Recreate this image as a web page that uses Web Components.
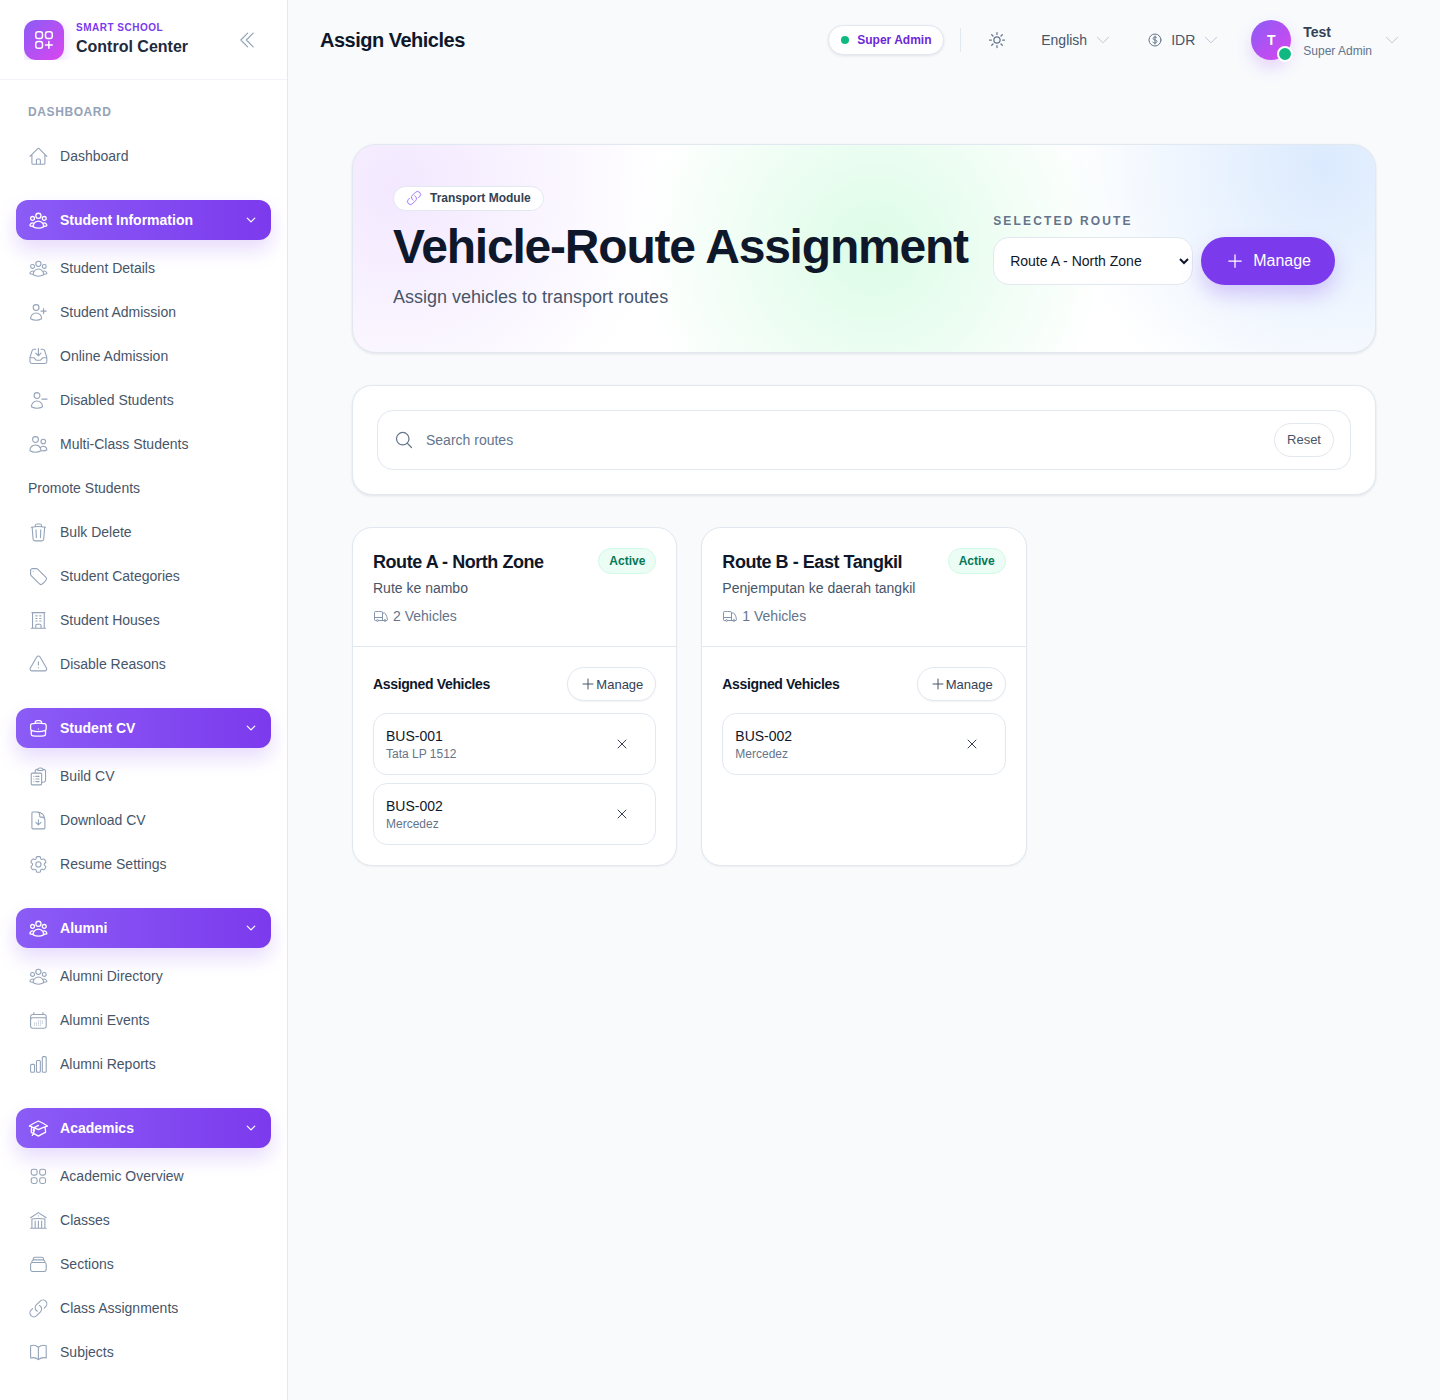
<!DOCTYPE html>
<html lang="en">
<head>
<meta charset="utf-8">
<title>Assign Vehicles</title>
<style>
  html, body { margin: 0; padding: 0; background: #f8fafc; }
  body { font-family: "Liberation Sans", Arial, sans-serif; height: 1400px; overflow: hidden; }
</style>
</head>
<body>
<app-shell>
  <side-bar slot="side">
    <nav-label>Dashboard</nav-label>
    <nav-item icon="home">Dashboard</nav-item>

    <nav-group icon="userGroup" label="Student Information">
      <nav-item icon="userGroup">Student Details</nav-item>
      <nav-item icon="userPlus">Student Admission</nav-item>
      <nav-item icon="inbox">Online Admission</nav-item>
      <nav-item icon="userMinus">Disabled Students</nav-item>
      <nav-item icon="users">Multi-Class Students</nav-item>
      <nav-item>Promote Students</nav-item>
      <nav-item icon="trash">Bulk Delete</nav-item>
      <nav-item icon="tag">Student Categories</nav-item>
      <nav-item icon="building">Student Houses</nav-item>
      <nav-item icon="warning">Disable Reasons</nav-item>
    </nav-group>

    <nav-group icon="briefcase" label="Student CV">
      <nav-item icon="clipboard">Build CV</nav-item>
      <nav-item icon="docDown">Download CV</nav-item>
      <nav-item icon="cog">Resume Settings</nav-item>
    </nav-group>

    <nav-group icon="userGroup" label="Alumni">
      <nav-item icon="userGroup">Alumni Directory</nav-item>
      <nav-item icon="calendar">Alumni Events</nav-item>
      <nav-item icon="chart">Alumni Reports</nav-item>
    </nav-group>

    <nav-group icon="cap" label="Academics">
      <nav-item icon="grid">Academic Overview</nav-item>
      <nav-item icon="library">Classes</nav-item>
      <nav-item icon="stack">Sections</nav-item>
      <nav-item icon="link">Class Assignments</nav-item>
      <nav-item icon="book">Subjects</nav-item>
    </nav-group>
  </side-bar>

  <top-bar slot="top" heading="Assign Vehicles"></top-bar>

  <hero-banner
    tag="Transport Module"
    heading="Vehicle-Route Assignment"
    sub="Assign vehicles to transport routes"></hero-banner>

  <search-card></search-card>

  <route-grid>
    <route-card name="Route A - North Zone" desc="Rute ke nambo" count="2 Vehicles">
      <vehicle-row code="BUS-001" model="Tata LP 1512"></vehicle-row>
      <vehicle-row code="BUS-002" model="Mercedez"></vehicle-row>
    </route-card>
    <route-card name="Route B - East Tangkil" desc="Penjemputan ke daerah tangkil" count="1 Vehicles">
      <vehicle-row code="BUS-002" model="Mercedez"></vehicle-row>
    </route-card>
  </route-grid>
</app-shell>

<script>
const ICONS = {
  home: 'm2.25 12 8.954-8.955c.44-.439 1.152-.439 1.591 0L21.75 12M4.5 9.75v10.125c0 .621.504 1.125 1.125 1.125H9.75v-4.875c0-.621.504-1.125 1.125-1.125h2.25c.621 0 1.125.504 1.125 1.125V21h4.125c.621 0 1.125-.504 1.125-1.125V9.75M8.25 21h8.25',
  userGroup: 'M18 18.72a9.094 9.094 0 0 0 3.741-.479 3 3 0 0 0-4.682-2.72m.94 3.198.001.031c0 .225-.012.447-.037.666A11.944 11.944 0 0 1 12 21c-2.17 0-4.207-.576-5.963-1.584A6.062 6.062 0 0 1 6 18.719m12 0a5.971 5.971 0 0 0-.941-3.197m0 0A5.995 5.995 0 0 0 12 12.75a5.995 5.995 0 0 0-5.058 2.772m0 0a3 3 0 0 0-4.681 2.72 8.986 8.986 0 0 0 3.74.477m.94-3.197a5.971 5.971 0 0 0-.94 3.197M15 6.75a3 3 0 1 1-6 0 3 3 0 0 1 6 0Zm6 3a2.25 2.25 0 1 1-4.5 0 2.25 2.25 0 0 1 4.5 0Zm-13.5 0a2.25 2.25 0 1 1-4.5 0 2.25 2.25 0 0 1 4.5 0Z',
  userPlus: 'M18 7.5v3m0 0v3m0-3h3m-3 0h-3m-2.25-4.125a3.375 3.375 0 1 1-6.75 0 3.375 3.375 0 0 1 6.75 0ZM3 19.235v-.11a6.375 6.375 0 0 1 12.75 0v.109A12.318 12.318 0 0 1 9.374 21c-2.331 0-4.512-.645-6.374-1.766Z',
  userMinus: 'M22 10.5h-6m-2.25-4.125a3.375 3.375 0 1 1-6.75 0 3.375 3.375 0 0 1 6.75 0ZM4 19.235v-.11a6.375 6.375 0 0 1 12.75 0v.109A12.318 12.318 0 0 1 10.374 21c-2.331 0-4.512-.645-6.374-1.766Z',
  users: 'M15 19.128a9.38 9.38 0 0 0 2.625.372 9.337 9.337 0 0 0 4.121-.952 4.125 4.125 0 0 0-7.533-2.493M15 19.128v-.003c0-1.113-.285-2.16-.786-3.07M15 19.128v.106A12.318 12.318 0 0 1 8.624 21c-2.331 0-4.512-.645-6.374-1.766l-.001-.109a6.375 6.375 0 0 1 11.964-3.07M12 6.375a3.375 3.375 0 1 1-6.75 0 3.375 3.375 0 0 1 6.75 0Zm8.25 2.25a2.625 2.625 0 1 1-5.25 0 2.625 2.625 0 0 1 5.25 0Z',
  inbox: 'M9 3.75H6.912a2.25 2.25 0 0 0-2.15 1.588L2.35 13.177a2.25 2.25 0 0 0-.1.661V18a2.25 2.25 0 0 0 2.25 2.25h15A2.25 2.25 0 0 0 21.75 18v-4.162c0-.224-.034-.447-.1-.661L19.24 5.338a2.25 2.25 0 0 0-2.15-1.588H15M2.25 13.5h3.86a2.25 2.25 0 0 1 2.012 1.244l.256.512a2.25 2.25 0 0 0 2.013 1.244h3.218a2.25 2.25 0 0 0 2.013-1.244l.256-.512a2.25 2.25 0 0 1 2.013-1.244h3.859M12 3v8.25m0 0-3-3m3 3 3-3',
  trash: 'm14.74 9-.346 9m-4.788 0L9.26 9m9.968-3.21c.342.052.682.107 1.022.166m-1.022-.165L18.16 19.673a2.25 2.25 0 0 1-2.244 2.077H8.084a2.25 2.25 0 0 1-2.244-2.077L4.772 5.79m14.456 0a48.108 48.108 0 0 0-3.478-.397m-12 .562c.34-.059.68-.114 1.022-.165m0 0a48.11 48.11 0 0 1 3.478-.397m7.5 0v-.916c0-1.18-.91-2.164-2.09-2.201a51.964 51.964 0 0 0-3.32 0c-1.18.037-2.09 1.022-2.09 2.201v.916m7.5 0a48.667 48.667 0 0 0-7.5 0',
  tag: 'M9.568 3H5.25A2.25 2.25 0 0 0 3 5.25v4.318c0 .597.237 1.17.659 1.591l9.581 9.581c.699.699 1.78.872 2.607.33a18.095 18.095 0 0 0 5.223-5.223c.542-.827.369-1.908-.33-2.607L11.16 3.66A2.25 2.25 0 0 0 9.568 3Z M6 6h.008v.008H6V6Z',
  building: 'M3.75 21h16.5M4.5 3h15M5.25 3v18m13.5-18v18M9 6.75h1.5m-1.5 3h1.5m-1.5 3h1.5m3-6H15m-1.5 3H15m-1.5 3H15M9 21v-3.375c0-.621.504-1.125 1.125-1.125h3.75c.621 0 1.125.504 1.125 1.125V21',
  warning: 'M12 9v3.75m-9.303 3.376c-.866 1.5.217 3.374 1.948 3.374h14.71c1.73 0 2.813-1.874 1.948-3.374L13.949 3.378c-.866-1.5-3.032-1.5-3.898 0L2.697 16.126ZM12 15.75h.007v.008H12v-.008Z',
  briefcase: 'M20.25 14.15v4.25c0 1.094-.787 2.036-1.872 2.18-2.087.277-4.216.42-6.378.42s-4.291-.143-6.378-.42c-1.085-.144-1.872-1.086-1.872-2.18v-4.25m16.5 0a2.18 2.18 0 0 0 .75-1.661V8.706c0-1.081-.768-2.015-1.837-2.175a48.114 48.114 0 0 0-3.413-.387m4.5 8.006c-.194.165-.42.295-.673.38A23.978 23.978 0 0 1 12 15.75c-2.648 0-5.195-.429-7.577-1.22a2.016 2.016 0 0 1-.673-.38m0 0A2.18 2.18 0 0 1 3 12.489V8.706c0-1.081.768-2.015 1.837-2.175a48.111 48.111 0 0 1 3.413-.387m7.5 0V5.25A2.25 2.25 0 0 0 13.5 3h-3a2.25 2.25 0 0 0-2.25 2.25v.894m7.5 0a48.667 48.667 0 0 0-7.5 0M12 12.75h.008v.008H12v-.008Z',
  clipboard: 'M9 12h3.75M9 15h3.75M9 18h3.75m3 .75H18a2.25 2.25 0 0 0 2.25-2.25V6.108c0-1.135-.845-2.098-1.976-2.192a48.424 48.424 0 0 0-1.123-.08m-5.801 0c-.065.21-.1.433-.1.664 0 .414.336.75.75.75h4.5a.75.75 0 0 0 .75-.75 2.25 2.25 0 0 0-.1-.664m-5.8 0A2.251 2.251 0 0 1 13.5 2.25H15c1.012 0 1.867.668 2.15 1.586m-5.8 0c-.376.023-.75.05-1.124.08C9.095 4.01 8.25 4.973 8.25 6.108V8.25m0 0H4.875c-.621 0-1.125.504-1.125 1.125v11.25c0 .621.504 1.125 1.125 1.125h9.75c.621 0 1.125-.504 1.125-1.125V9.375c0-.621-.504-1.125-1.125-1.125H8.25ZM6.75 12h.008v.008H6.75V12Zm0 3h.008v.008H6.75V15Zm0 3h.008v.008H6.75V18Z',
  docDown: 'M19.5 14.25v-2.625a3.375 3.375 0 0 0-3.375-3.375h-1.5A1.125 1.125 0 0 1 13.5 7.125v-1.5a3.375 3.375 0 0 0-3.375-3.375H8.25m.75 12 3 3m0 0 3-3m-3 3v-6m-1.5-9H5.625c-.621 0-1.125.504-1.125 1.125v17.25c0 .621.504 1.125 1.125 1.125h12.75c.621 0 1.125-.504 1.125-1.125V11.25a9 9 0 0 0-9-9Z',
  cog: 'M9.594 3.94c.09-.542.56-.94 1.11-.94h2.593c.55 0 1.02.398 1.11.94l.213 1.281c.063.374.313.686.645.87.074.04.147.083.22.127.325.196.72.257 1.075.124l1.217-.456a1.125 1.125 0 0 1 1.37.49l1.296 2.247a1.125 1.125 0 0 1-.26 1.431l-1.003.827c-.293.241-.438.613-.43.992a7.723 7.723 0 0 1 0 .255c-.008.378.137.75.43.991l1.004.827c.424.35.534.955.26 1.43l-1.298 2.247a1.125 1.125 0 0 1-1.369.491l-1.217-.456c-.355-.133-.75-.072-1.076.124a6.47 6.47 0 0 1-.22.128c-.331.183-.581.495-.644.869l-.213 1.281c-.09.543-.56.94-1.11.94h-2.594c-.55 0-1.019-.398-1.11-.94l-.213-1.281c-.062-.374-.312-.686-.644-.87a6.52 6.52 0 0 1-.22-.127c-.325-.196-.72-.257-1.076-.124l-1.217.456a1.125 1.125 0 0 1-1.369-.49l-1.297-2.247a1.125 1.125 0 0 1 .26-1.431l1.004-.827c.292-.24.437-.613.43-.991a6.932 6.932 0 0 1 0-.255c.007-.38-.138-.751-.43-.992l-1.004-.827a1.125 1.125 0 0 1-.26-1.43l1.297-2.247a1.125 1.125 0 0 1 1.37-.491l1.216.456c.356.133.751.072 1.076-.124.072-.044.146-.086.22-.128.332-.183.582-.495.644-.869l.214-1.28Z M15 12a3 3 0 1 1-6 0 3 3 0 0 1 6 0Z',
  calendar: 'M6.75 3v2.25M17.25 3v2.25M3 18.75V7.5a2.25 2.25 0 0 1 2.25-2.25h13.5A2.25 2.25 0 0 1 21 7.5v11.25m-18 0A2.25 2.25 0 0 0 5.25 21h13.5A2.25 2.25 0 0 0 21 18.75m-18 0v-7.5A2.25 2.25 0 0 1 5.25 9h13.5A2.25 2.25 0 0 1 21 11.25v7.5m-9-6h.008v.008H12v-.008ZM12 15h.008v.008H12V15Zm0 2.25h.008v.008H12v-.008ZM9.75 15h.008v.008H9.75V15Zm0 2.25h.008v.008H9.75v-.008ZM7.5 15h.008v.008H7.5V15Zm0 2.25h.008v.008H7.5v-.008Zm6.75-4.5h.008v.008h-.008v-.008Zm0 2.25h.008v.008h-.008V15Zm0 2.25h.008v.008h-.008v-.008Zm2.25-4.5h.008v.008H16.5v-.008Zm0 2.25h.008v.008H16.5V15Z',
  chart: 'M3 13.125C3 12.504 3.504 12 4.125 12h2.25c.621 0 1.125.504 1.125 1.125v6.75C7.5 20.496 6.996 21 6.375 21h-2.25A1.125 1.125 0 0 1 3 19.875v-6.75ZM9.75 8.625c0-.621.504-1.125 1.125-1.125h2.25c.621 0 1.125.504 1.125 1.125v11.25c0 .621-.504 1.125-1.125 1.125h-2.25a1.125 1.125 0 0 1-1.125-1.125V8.625ZM16.5 4.125c0-.621.504-1.125 1.125-1.125h2.25C20.496 3 21 3.504 21 4.125v15.75c0 .621-.504 1.125-1.125 1.125h-2.25a1.125 1.125 0 0 1-1.125-1.125V4.125Z',
  cap: 'M4.26 10.147a60.438 60.438 0 0 0-.491 6.347A48.62 48.62 0 0 1 12 20.904a48.62 48.62 0 0 1 8.232-4.41 60.46 60.46 0 0 0-.491-6.347m-15.482 0a50.636 50.636 0 0 0-2.658-.813A59.906 59.906 0 0 1 12 3.493a59.903 59.903 0 0 1 10.399 5.84c-.896.248-1.783.52-2.658.814m-15.482 0A50.717 50.717 0 0 1 12 13.489a50.702 50.702 0 0 1 7.74-3.342M6.75 15a.75.75 0 1 0 0-1.5.75.75 0 0 0 0 1.5Zm0 0v-3.675A55.378 55.378 0 0 1 12 8.443m-7.007 11.55A5.981 5.981 0 0 0 6.75 15.75v-1.5',
  grid: 'M3.75 6A2.25 2.25 0 0 1 6 3.75h2.25A2.25 2.25 0 0 1 10.5 6v2.25a2.25 2.25 0 0 1-2.25 2.25H6a2.25 2.25 0 0 1-2.25-2.25V6ZM3.75 15.75A2.25 2.25 0 0 1 6 13.5h2.25a2.25 2.25 0 0 1 2.25 2.25V18a2.25 2.25 0 0 1-2.25 2.25H6A2.25 2.25 0 0 1 3.75 18v-2.25ZM13.5 6a2.25 2.25 0 0 1 2.25-2.25H18A2.25 2.25 0 0 1 20.25 6v2.25A2.25 2.25 0 0 1 18 10.5h-2.25a2.25 2.25 0 0 1-2.25-2.25V6ZM13.5 15.75a2.25 2.25 0 0 1 2.25-2.25H18a2.25 2.25 0 0 1 2.25 2.25V18A2.25 2.25 0 0 1 18 20.25h-2.25A2.25 2.25 0 0 1 13.5 18v-2.25Z',
  library: 'M12 21v-8.25M15.75 21v-8.25M8.25 21v-8.25M3 9l9-6 9 6m-1.5 12V10.332A48.36 48.36 0 0 0 12 9.75c-2.551 0-5.056.2-7.5.582V21M3 21h18M12 6.75h.008v.008H12V6.75Z',
  stack: 'M6 6.878V6a2.25 2.25 0 0 1 2.25-2.25h7.5A2.25 2.25 0 0 1 18 6v.878m-12 0c.235-.083.487-.128.75-.128h10.5c.263 0 .515.045.75.128m-12 0A2.25 2.25 0 0 0 4.5 9v.878m13.5-3A2.25 2.25 0 0 1 19.5 9v.878m0 0a2.246 2.246 0 0 0-.75-.128H5.25c-.263 0-.515.045-.75.128m15 0A2.25 2.25 0 0 1 21 12v6a2.25 2.25 0 0 1-2.25 2.25H5.25A2.25 2.25 0 0 1 3 18v-6c0-.98.626-1.813 1.5-2.122',
  link: 'M13.19 8.688a4.5 4.5 0 0 1 1.242 7.244l-4.5 4.5a4.5 4.5 0 0 1-6.364-6.364l1.757-1.757m13.35-.622 1.757-1.757a4.5 4.5 0 0 0-6.364-6.364l-4.5 4.5a4.5 4.5 0 0 0 1.242 7.244',
  book: 'M12 6.042A8.967 8.967 0 0 0 6 3.75c-1.052 0-2.062.18-3 .512v14.25A8.987 8.987 0 0 1 6 18c2.305 0 4.408.867 6 2.292m0-14.25a8.966 8.966 0 0 1 6-2.292c1.052 0 2.062.18 3 .512v14.25A8.987 8.987 0 0 0 18 18a8.967 8.967 0 0 0-6 2.292m0-14.25v14.25',
  chevronsLeft: 'm18.75 4.5-7.5 7.5 7.5 7.5m-6-15L5.25 12l7.5 7.5',
  chevronDown: 'm19.5 8.25-7.5 7.5-7.5-7.5',
  sun: 'M12 3v2.25m6.364.386-1.591 1.591M21 12h-2.25m-.386 6.364-1.591-1.591M12 18.75V21m-4.773-4.227-1.591 1.591M5.25 12H3m4.227-4.773L5.636 5.636M15.75 12a3.75 3.75 0 1 1-7.5 0 3.75 3.75 0 0 1 7.5 0Z',
  dollar: 'M12 6v12m-3-2.818.879.659c1.171.879 3.07.879 4.242 0 1.172-.879 1.172-2.303 0-3.182C13.536 12.219 12.768 12 12 12c-.725 0-1.45-.22-2.003-.659-1.106-.879-1.106-2.303 0-3.182s2.9-.879 4.006 0l.415.33M21 12a9 9 0 1 1-18 0 9 9 0 0 1 18 0Z',
  plus: 'M12 4.5v15m7.5-7.5h-15',
  close: 'M6 18 18 6M6 6l12 12',
  search: 'm21 21-5.197-5.197m0 0A7.5 7.5 0 1 0 5.196 5.196a7.5 7.5 0 0 0 10.607 10.607Z',
  truck: 'M8.25 18.75a1.5 1.5 0 0 1-3 0m3 0a1.5 1.5 0 0 0-3 0m3 0h6m-9 0H3.375a1.125 1.125 0 0 1-1.125-1.125V14.25m17.25 4.5a1.5 1.5 0 0 1-3 0m3 0a1.5 1.5 0 0 0-3 0m3 0h1.125c.621 0 1.129-.504 1.09-1.124a17.902 17.902 0 0 0-3.213-9.193 2.056 2.056 0 0 0-1.58-.86H14.25M16.5 18.75h-2.25m0-11.177v-.958c0-.568-.422-1.048-.987-1.106a48.554 48.554 0 0 0-10.026 0 1.106 1.106 0 0 0-.987 1.106v7.635m12-6.677v6.677m0 4.5v-4.5m0 0h-12',
  squaresPlus: 'M13.5 16.875h3.375m0 0h3.375m-3.375-3.375v3.375m0 3.375v-3.375M6 10.5h2.25a2.25 2.25 0 0 0 2.25-2.25V6a2.25 2.25 0 0 0-2.25-2.25H6A2.25 2.25 0 0 0 3.75 6v2.25A2.25 2.25 0 0 0 6 10.5Zm0 9.75h2.25A2.25 2.25 0 0 0 10.5 18v-2.25a2.25 2.25 0 0 0-2.25-2.25H6a2.25 2.25 0 0 0-2.25 2.25V18A2.25 2.25 0 0 0 6 20.25Zm9.75-9.75H18a2.25 2.25 0 0 0 2.25-2.25V6A2.25 2.25 0 0 0 18 3.75h-2.25A2.25 2.25 0 0 0 13.5 6v2.25a2.25 2.25 0 0 0 2.25 2.25Z'
};

// small helper so every element sets up its shadow root the same way
class Base extends HTMLElement {
  connectedCallback() {
    if (this.shadowRoot) return;
    this.attachShadow({ mode: 'open' });
    this.shadowRoot.innerHTML = this.render();
  }
  attr(name, fallback = '') {
    return this.getAttribute(name) ?? fallback;
  }
}

class UiIcon extends Base {
  render() {
    const size = this.attr('size', '20');
    const stroke = this.attr('stroke', '1');
    return `
      <style>
        :host { display: inline-flex; flex: none; width: ${size}px; height: ${size}px; }
        svg { display: block; width: 100%; height: 100%; }
      </style>
      <svg viewBox="0 0 24 24" fill="none" stroke="currentColor" stroke-width="${stroke}" stroke-linecap="round" stroke-linejoin="round">
        <path d="${ICONS[this.attr('name')] || ''}"></path>
      </svg>`;
  }
}

class AppShell extends Base {
  render() {
    return `
      <style>
        :host { display: flex; width: 1440px; height: 1400px; overflow: hidden; background: #f8fafc; }
        main { flex: 1; min-width: 0; }
        .content { padding: 64px 64px 0; display: flex; flex-direction: column; gap: 32px; }
      </style>
      <slot name="side"></slot>
      <main>
        <slot name="top"></slot>
        <div class="content"><slot></slot></div>
      </main>`;
  }
}

class SideBar extends Base {
  render() {
    return `
      <style>
        :host {
          display: block; flex: none; width: 288px; height: 1400px; box-sizing: border-box;
          background: #fff; border-right: 1px solid #e2e8f0; overflow: hidden;
        }
        header { height: 80px; box-sizing: border-box; border-bottom: 1px solid #f1f5f9; display: flex; align-items: center; padding: 0 24px; }
        .mark { height: 40px; width: 50px; overflow: hidden; flex: none; margin-right: 2px; }
        .tile {
          width: 40px; height: 40px; border-radius: 12px; color: #fff;
          background: linear-gradient(135deg, #8b5cf6, #d946ef);
          box-shadow: 0 4px 12px rgba(168, 85, 247, .25);
          display: flex; align-items: center; justify-content: center;
        }
        .brand { flex: 1; margin-top: -1px; }
        .brand small { display: block; font-size: 10px; line-height: 14px; font-weight: 700; letter-spacing: .05em; color: #7c3aed; }
        .brand strong { display: block; margin-top: 1px; font-size: 16px; line-height: 22px; font-weight: 700; color: #1e293b; }
        .collapse { color: #94a3b8; margin-right: 5px; display: flex; }
        nav { padding: 20px 16px 0; }
      </style>
      <header>
        <div class="mark"><div class="tile"><ui-icon name="squaresPlus" size="24" stroke="1.5"></ui-icon></div></div>
        <div class="brand"><small>SMART SCHOOL</small><strong>Control Center</strong></div>
        <span class="collapse"><ui-icon name="chevronsLeft" size="22" stroke="1.25"></ui-icon></span>
      </header>
      <nav><slot></slot></nav>`;
  }
}

class NavLabel extends Base {
  render() {
    return `
      <style>
        :host {
          display: block; padding: 0 12px; height: 24px; line-height: 24px;
          font-size: 12px; font-weight: 700; letter-spacing: .05em; text-transform: uppercase; color: #94a3b8;
          margin-bottom: 10px;
        }
      </style>
      <slot></slot>`;
  }
}

class NavItem extends Base {
  render() {
    const icon = this.getAttribute('icon');
    return `
      <style>
        :host { display: flex; align-items: center; gap: 12px; height: 44px; padding: 0 12px; font-size: 14px; color: #475569; }
        ui-icon { color: #94a3b8; margin: 0 -.4px; }
      </style>
      ${icon ? `<ui-icon name="${icon}" size="20.8" stroke="1.25"></ui-icon>` : ''}
      <slot></slot>`;
  }
}

class NavGroup extends Base {
  render() {
    return `
      <style>
        :host { display: block; margin-top: 22px; }
        .head {
          display: flex; align-items: center; gap: 12px; height: 40px; padding: 0 12px; margin-bottom: 6px;
          border-radius: 12px; color: #fff; font-size: 14px; font-weight: 700;
          background: linear-gradient(90deg, #8b5cf6, #7c3aed);
          box-shadow: 0 10px 20px rgba(124, 58, 237, .18);
        }
        .lead { margin: 0 -.4px; }
        .name { flex: 1; }
        .chev { margin-right: 2px; }
      </style>
      <div class="head">
        <ui-icon class="lead" name="${this.attr('icon')}" size="20.8" stroke="1.5"></ui-icon>
        <span class="name">${this.attr('label')}</span>
        <ui-icon class="chev" name="chevronDown" size="12" stroke="2.5"></ui-icon>
      </div>
      <slot></slot>`;
  }
}

class TopBar extends Base {
  render() {
    return `
      <style>
        :host { display: flex; align-items: center; height: 80px; padding: 0 40px 0 32px; box-sizing: border-box; color: #475569; font-size: 14px; }
        h1 { margin: 0 auto 0 0; font-size: 20px; line-height: 28px; font-weight: 700; letter-spacing: -.025em; color: #0f172a; }
        .role {
          display: flex; align-items: center; gap: 8px; box-sizing: border-box; width: 116px; height: 30px; padding: 0 12px;
          border: 1px solid #e2e8f0; border-radius: 999px; background: #fff;
          box-shadow: 0 1px 3px rgba(15, 23, 42, .1);
          font-size: 12px; font-weight: 700; color: #6d28d9; white-space: nowrap;
        }
        .role i { width: 8px; height: 8px; border-radius: 50%; background: #10b981; flex: none; }
        .rule { width: 1px; height: 24px; background: #e2e8f0; margin-left: 16px; }
        .sun { margin-left: 26px; width: 20px; display: flex; justify-content: center; color: #64748b; }
        .pick { display: flex; align-items: center; gap: 8px; }
        .pick .chev { color: #b8c4d4; margin: 0 -1px; }
        .lang { margin-left: 34px; }
        .cur { margin-left: 36px; }
        .cur .coin { color: #64748b; }
        .avatar {
          position: relative; width: 40px; height: 40px; border-radius: 50%; margin-left: 32px; flex: none;
          background: linear-gradient(135deg, #8b5cf6, #d946ef); color: #fff; font-weight: 700; font-size: 14px;
          display: flex; align-items: center; justify-content: center;
          box-shadow: 0 8px 16px rgba(168, 85, 247, .22);
        }
        .avatar::after {
          content: ""; position: absolute; right: -2px; bottom: -2px; width: 12px; height: 12px; border-radius: 50%;
          background: #10b981; border: 2px solid #fff;
        }
        .who { margin-left: 12px; padding-top: 3px; }
        .who b { display: block; font-size: 14px; line-height: 18px; color: #334155; }
        .who span { display: block; margin-top: 1px; font-size: 12px; line-height: 18px; color: #64748b; }
        .user-chev { margin: 0 -1px 0 11px; color: #b8c4d4; }
      </style>
      <h1>${this.attr('heading')}</h1>
      <div class="role"><i></i>Super Admin</div>
      <div class="rule"></div>
      <div class="sun"><ui-icon name="sun" size="20" stroke="1.5"></ui-icon></div>
      <div class="pick lang">English <ui-icon class="chev" name="chevronDown" size="18" stroke="1.25"></ui-icon></div>
      <div class="pick cur"><ui-icon class="coin" name="dollar" size="16" stroke="1.5"></ui-icon>IDR<ui-icon class="chev" name="chevronDown" size="18" stroke="1.25"></ui-icon></div>
      <div class="avatar">T</div>
      <div class="who"><b>Test</b><span>Super Admin</span></div>
      <ui-icon class="user-chev" name="chevronDown" size="18" stroke="1.25"></ui-icon>`;
  }
}

class HeroBanner extends Base {
  render() {
    return `
      <style>
        :host {
          display: flex; align-items: center; justify-content: space-between; box-sizing: border-box;
          height: 209px; padding: 0 40px; border: 1px solid #e2e8f0; border-radius: 24px;
          box-shadow: 0 1px 3px rgba(15, 23, 42, .1);
          background:
            radial-gradient(circle at 4% 20%, #f3e8ff 0, rgba(243, 232, 255, 0) 270px),
            radial-gradient(circle at 51% 50%, #dcfce7 0, rgba(220, 252, 231, 0) 235px),
            radial-gradient(circle at 95% 10%, #dbeafe 0, rgba(219, 234, 254, 0) 260px),
            #fff;
        }
        .left { margin-bottom: 1px; }
        .tag {
          display: inline-flex; align-items: center; gap: 8px; box-sizing: border-box; height: 25px; padding: 0 12px;
          border: 1px solid #e2e8f0; border-radius: 999px; background: #fff;
          font-size: 12px; font-weight: 700; color: #334155;
        }
        .tag ui-icon { color: #8b5cf6; }
        h2 { margin: 9px 0 11px; font-size: 48px; line-height: 53px; font-weight: 700; letter-spacing: -.025em; color: #0f172a; white-space: nowrap; }
        p { margin: 0; font-size: 18px; line-height: 27px; color: #475569; }
        .pick { margin-left: 24px; flex: none; }
        label { display: block; font-size: 12px; line-height: 16px; font-weight: 700; letter-spacing: .18em; color: #64748b; margin-bottom: 8px; }
        .row { display: flex; gap: 8px; }
        select {
          width: 200px; height: 48px; box-sizing: border-box; padding: 0 0 0 12px; border: 1px solid #e2e8f0; border-radius: 16px;
          background-color: #fff; font: 14px "Liberation Sans", Arial, sans-serif; color: #0f172a; outline: none;
        }
        button {
          display: flex; align-items: center; gap: 8px; height: 48px; padding: 0 24px; border: 0; border-radius: 999px;
          background: #7c3aed; color: #fff; font: 16px "Liberation Sans", Arial, sans-serif;
          box-shadow: 0 10px 20px rgba(124, 58, 237, .25);
        }
      </style>
      <div class="left">
        <span class="tag"><ui-icon name="link" size="16" stroke="1.25"></ui-icon>${this.attr('tag')}</span>
        <h2>${this.attr('heading')}</h2>
        <p>${this.attr('sub')}</p>
      </div>
      <div class="pick">
        <label>SELECTED ROUTE</label>
        <div class="row">
          <select>
            <option>Route A - North Zone</option>
            <option>Route B - East Tangkil</option>
          </select>
          <button><ui-icon name="plus" size="20" stroke="1.5"></ui-icon>Manage</button>
        </div>
      </div>`;
  }
}

class SearchCard extends Base {
  render() {
    return `
      <style>
        :host {
          display: block; box-sizing: border-box; height: 110px; padding: 24px; background: #fff;
          border: 1px solid #e2e8f0; border-radius: 20px; box-shadow: 0 1px 3px rgba(15, 23, 42, .1);
        }
        .box {
          display: flex; align-items: center; gap: 12px; height: 60px; box-sizing: border-box; padding: 0 16px;
          border: 1px solid #e2e8f0; border-radius: 16px; background: #fff; color: #64748b;
        }
        input { flex: 1; min-width: 0; border: 0; outline: 0; padding: 0; background: none; font: 14px "Liberation Sans", Arial, sans-serif; color: #0f172a; }
        input::placeholder { color: #64748b; opacity: 1; }
        button {
          height: 34px; width: 60px; padding: 0 0 2px; border: 1px solid #e2e8f0; border-radius: 999px; background: #fff;
          font: 13px "Liberation Sans", Arial, sans-serif; color: #475569;
        }
      </style>
      <div class="box">
        <ui-icon name="search" size="20" stroke="1.5"></ui-icon>
        <input type="text" placeholder="Search routes">
        <button>Reset</button>
      </div>`;
  }
}

class RouteGrid extends Base {
  render() {
    return `
      <style>
        :host { display: grid; grid-template-columns: repeat(3, 1fr); gap: 24px; }
      </style>
      <slot></slot>`;
  }
}

class RouteCard extends Base {
  render() {
    return `
      <style>
        :host {
          display: block; box-sizing: border-box; background: #fff; border: 1px solid #e2e8f0; border-radius: 20px;
          box-shadow: 0 1px 2px rgba(15, 23, 42, .05); overflow: hidden;
        }
        .top { padding: 20px; border-bottom: 1px solid #e2e8f0; height: 119px; box-sizing: border-box; }
        .title { display: flex; justify-content: space-between; align-items: flex-start; }
        h3 { margin: 0; font-size: 18px; line-height: 28px; font-weight: 700; letter-spacing: -.025em; color: #0f172a; }
        .badge {
          box-sizing: border-box; height: 26px; padding: 0 10px; line-height: 24px; border: 1px solid #d1fae5; border-radius: 999px;
          background: #ecfdf5; color: #047857; font-size: 12px; font-weight: 700;
        }
        .desc { margin: 2px 0 0; font-size: 14px; line-height: 20px; color: #475569; }
        .meta { display: flex; align-items: center; gap: 4px; margin-top: 8px; font-size: 14px; line-height: 20px; color: #64748b; }
        .meta ui-icon { color: #8494aa; }
        .body { padding: 20px; }
        .bar { display: flex; justify-content: space-between; align-items: center; margin-bottom: 12px; }
        h4 { margin: 0; font-size: 14px; font-weight: 700; letter-spacing: -.025em; color: #0f172a; }
        button {
          display: flex; align-items: center; height: 34px; padding: 0 12px; border: 1px solid #e2e8f0; border-radius: 999px; background: #fff;
          font: 13px "Liberation Sans", Arial, sans-serif; color: #334155; box-shadow: 0 1px 2px rgba(15, 23, 42, .05);
        }
        button ui-icon { color: #475569; }
        .list { display: flex; flex-direction: column; gap: 8px; }
      </style>
      <div class="top">
        <div class="title"><h3>${this.attr('name')}</h3><span class="badge">Active</span></div>
        <p class="desc">${this.attr('desc')}</p>
        <div class="meta"><ui-icon name="truck" size="16" stroke="1.5"></ui-icon>${this.attr('count')}</div>
      </div>
      <div class="body">
        <div class="bar">
          <h4>Assigned Vehicles</h4>
          <button><ui-icon name="plus" size="16" stroke="1.5"></ui-icon>Manage</button>
        </div>
        <div class="list"><slot></slot></div>
      </div>`;
  }
}

class VehicleRow extends Base {
  render() {
    return `
      <style>
        :host {
          display: flex; align-items: center; justify-content: space-between; box-sizing: border-box; height: 62px;
          padding: 0 25px 0 12px; border: 1px solid #e2e8f0; border-radius: 14px; background: #fff;
        }
        b { display: block; font-size: 14px; line-height: 20px; font-weight: 400; color: #0f172a; }
        span { display: block; font-size: 12px; line-height: 16px; color: #64748b; }
        ui-icon { color: #0f172a; }
      </style>
      <div><b>${this.attr('code')}</b><span>${this.attr('model')}</span></div>
      <ui-icon name="close" size="16" stroke="1.25"></ui-icon>`;
  }
}

customElements.define('ui-icon', UiIcon);
customElements.define('app-shell', AppShell);
customElements.define('side-bar', SideBar);
customElements.define('nav-label', NavLabel);
customElements.define('nav-item', NavItem);
customElements.define('nav-group', NavGroup);
customElements.define('top-bar', TopBar);
customElements.define('hero-banner', HeroBanner);
customElements.define('search-card', SearchCard);
customElements.define('route-grid', RouteGrid);
customElements.define('route-card', RouteCard);
customElements.define('vehicle-row', VehicleRow);
</script>
</body>
</html>
